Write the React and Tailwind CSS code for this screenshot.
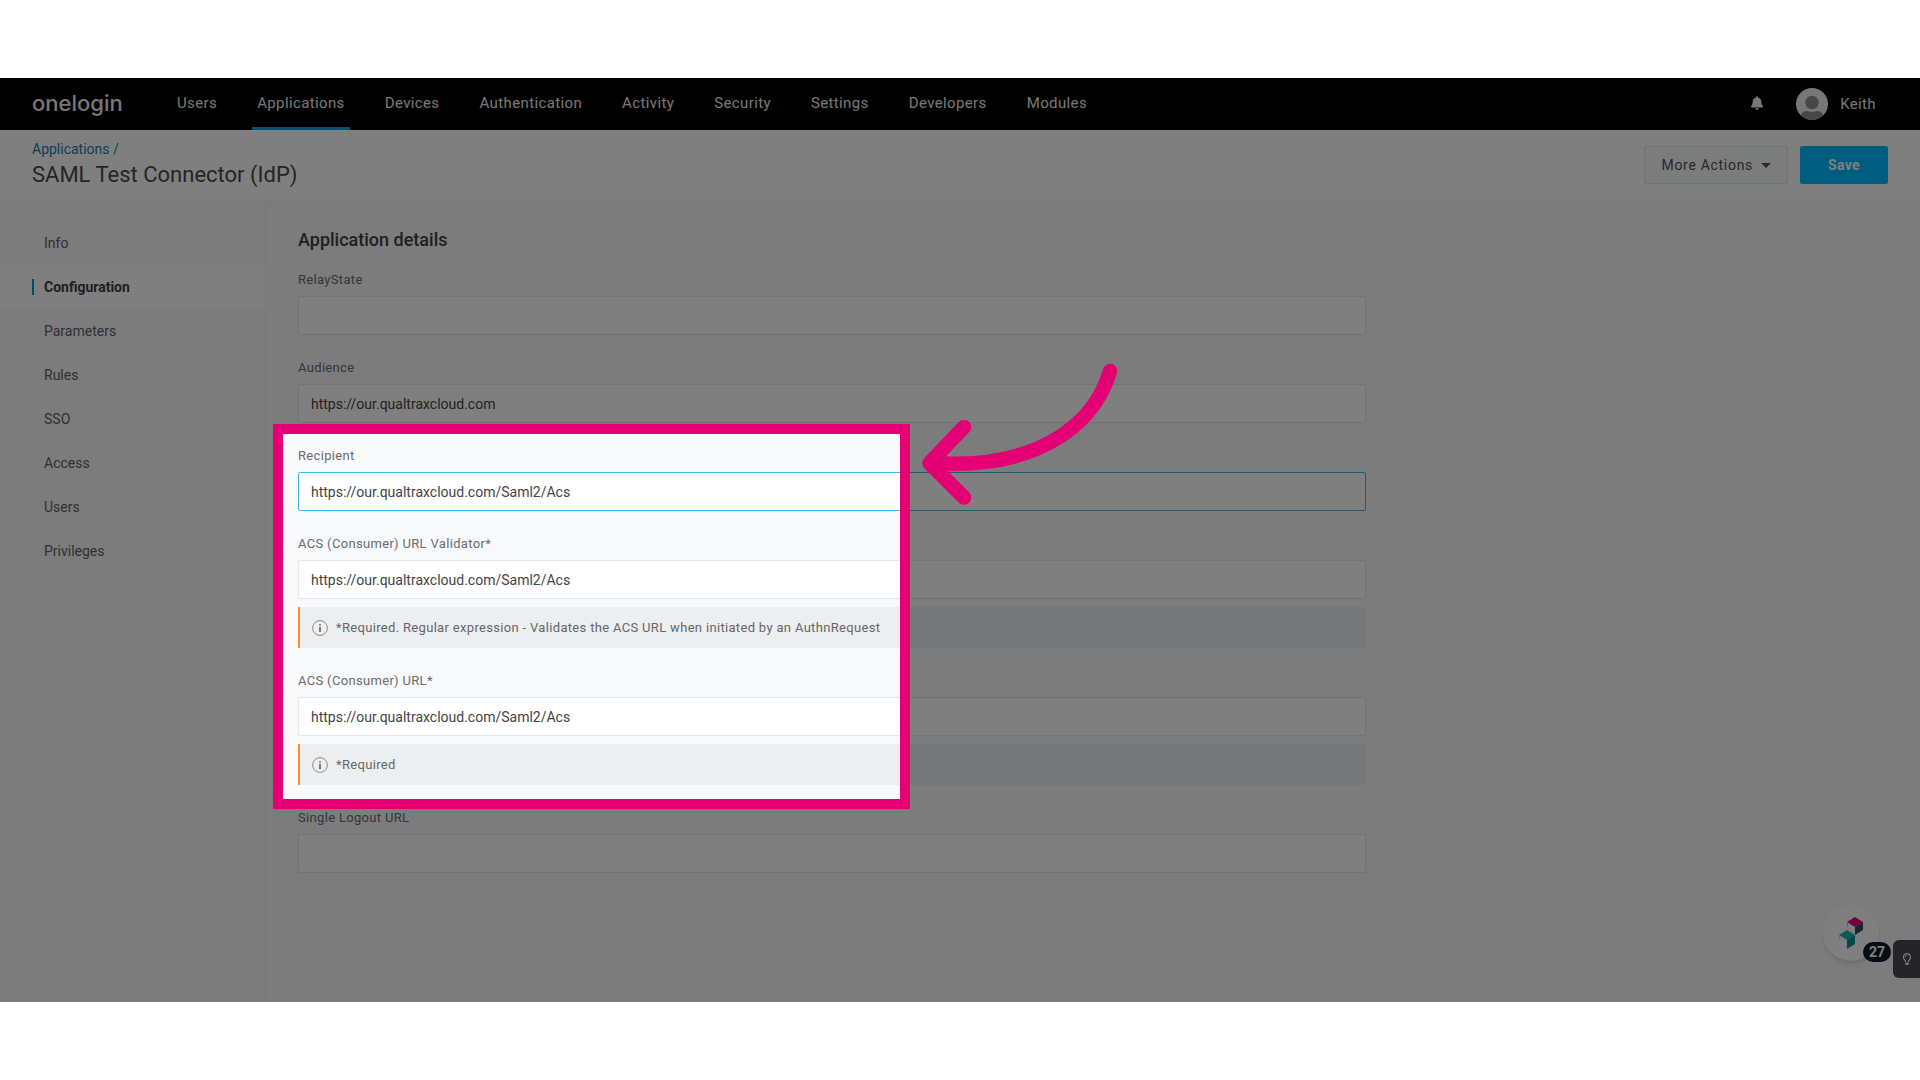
import React from 'react';
import { FaBell, FaRegLightbulb } from 'react-icons/fa';

const NAV_ITEMS = [
  'Users',
  'Applications',
  'Devices',
  'Authentication',
  'Activity',
  'Security',
  'Settings',
  'Developers',
  'Modules',
];

const SIDE_ITEMS = ['Info', 'Configuration', 'Parameters', 'Rules', 'SSO', 'Access', 'Users', 'Privileges'];

const ACS_URL = 'https://our.qualtraxcloud.com/Saml2/Acs';

const FIELDS = [
  { id: 'relay-state', label: 'RelayState', value: '' },
  { id: 'audience', label: 'Audience', value: 'https://our.qualtraxcloud.com' },
  { id: 'recipient', label: 'Recipient', value: ACS_URL, active: true },
  {
    id: 'acs-validator',
    label: 'ACS (Consumer) URL Validator*',
    value: ACS_URL,
    hint: '*Required. Regular expression - Validates the ACS URL when initiated by an AuthnRequest',
  },
  { id: 'acs-url', label: 'ACS (Consumer) URL*', value: ACS_URL, hint: '*Required' },
  { id: 'logout-url', label: 'Single Logout URL', value: '' },
];

const Avatar = () => (
  <svg viewBox="0 0 32 32" className="h-8 w-8">
    <defs>
      <clipPath id="avatar-clip">
        <circle cx="16" cy="16" r="16" />
      </clipPath>
    </defs>
    <g clipPath="url(#avatar-clip)">
      <rect width="32" height="32" fill="#eeeeee" />
      <circle cx="16" cy="14.500" r="6.800" fill="#8c9090" />
      <path d="M4 32c0-6 3-9 6.500-9 2 0 3 1 5.500 1s3.500-1 5.500-1c3.500 0 6.500 3 6.500 9z" fill="#8c9090" />
    </g>
  </svg>
);

const Header = () => (
  <header className="flex h-[52px] shrink-0 items-center bg-black pl-8 pr-11 text-[#eeeeee]">
    <a href="#home" className="w-[140px] pb-0.5 font-[Inter,sans-serif] text-[22px] leading-7 font-medium">
      onelogin
    </a>
    <nav className="flex h-full flex-1 gap-[30px]">
      {NAV_ITEMS.map((item) => (
        <a
          key={item}
          href={`#${item.toLowerCase()}`}
          className={`flex h-full items-center border-b-3 px-[5px] pt-0.5 text-[15px] tracking-wide ${
            item === 'Applications' ? 'border-[#00a8e0]' : 'border-transparent'
          }`}
        >
          {item}
        </a>
      ))}
    </nav>
    <button type="button" aria-label="Notifications" className="mr-8 pb-0.5">
      <FaBell className="h-[14px] w-[14px]" />
    </button>
    <button type="button" className="flex items-center gap-3 text-[15px] tracking-wide">
      <Avatar />
      Keith
    </button>
  </header>
);

const TitleBar = () => (
  <div className="flex h-[71px] shrink-0 items-center justify-between border-b border-[#eef1f1] bg-white px-8">
    <div>
      <a href="#applications" className="block text-sm leading-5 text-[#1a7fa6]">
        Applications /
      </a>
      <h1 className="text-[22px] leading-8 text-[#4a4a4a]">SAML Test Connector (IdP)</h1>
    </div>
    <div className="flex gap-3">
      <button
        type="button"
        className="flex h-[38px] items-center gap-2 rounded-xs border border-[#dfe4e4] bg-[#f7fafa] px-4 text-sm tracking-wider text-[#505050]"
      >
        More Actions
        <svg viewBox="0 0 10 5" className="h-[5px] w-[10px]" fill="currentColor">
          <path d="M0 0h10L5 5z" />
        </svg>
      </button>
      <button type="button" className="h-[38px] w-[88px] rounded-xs bg-[#00baff] text-sm font-bold tracking-wide text-white">
        Save
      </button>
    </div>
  </div>
);

const Sidebar = () => (
  <nav className="w-[266px] shrink-0 border-r border-[#eceef0] pt-5">
    {SIDE_ITEMS.map((item) => {
      const active = item === 'Configuration';
      return (
        <a
          key={item}
          href={`#${item.toLowerCase()}`}
          className={`flex h-11 items-center pl-8 text-sm ${
            active ? 'bg-[#fdfffd] font-bold text-[#404040]' : 'text-[#606060]'
          }`}
        >
          <span className={`h-4 border-l-2 ${active ? 'border-[#009cd6]' : 'border-transparent'}`} />
          <span className="pl-[10px]">{item}</span>
        </a>
      );
    })}
  </nav>
);

const InfoIcon = () => (
  <svg viewBox="0 0 16 16" className="h-4 w-4 shrink-0">
    <circle cx="8" cy="8" r="7.400" fill="none" stroke="#8a8a8a" />
    <circle cx="8" cy="5" r="1" fill="#777" />
    <path d="M7 7h2v5H7z" fill="#777" />
  </svg>
);

const Field = ({ id, label, value, hint, active }) => (
  <div>
    <label htmlFor={id} className="block text-[13px] leading-5 tracking-wide text-[#6b6b6b]">
      {label}
    </label>
    <input
      id={id}
      type="text"
      defaultValue={value}
      className={`mt-[6px] block h-[39px] w-full rounded-xs border bg-white px-3 text-sm text-[#444] outline-none ${
        active ? 'border-[#41b4e6]' : 'border-[#e4e7e8]'
      }`}
    />
    {hint && (
      <p className="mt-2 flex h-[41px] items-center gap-2 border-l-2 border-[#ff8a1f] bg-[#edeef0] px-3 text-[13px] tracking-wide text-[#666]">
        <InfoIcon />
        {hint}
      </p>
    )}
  </div>
);

const HelpWidgets = () => (
  <>
    <button
      type="button"
      aria-label="Help"
      className="absolute bottom-[41px] right-[41px] flex h-14 w-14 items-center justify-center rounded-full bg-white shadow-md"
    >
      <svg viewBox="0 0 24 32" className="h-8 w-6">
        <path d="M8 5l8-5 8 5-8 5z" fill="#e4007c" />
        <path d="M16 10l8-5v8l-8 5z" fill="#3c4a58" />
        <path d="M8 5l1 1v4l-1-1z" fill="#f3a6cd" />
        <path d="M0 18l8-5 8 5-8 5z" fill="#19b5b5" />
        <path d="M8 23l8-5v9l-8 5z" fill="#0c8f94" />
        <path d="M0 18l1 1v4l-1-1z" fill="#a3e0e0" />
      </svg>
    </button>
    <span className="absolute bottom-10 right-[29px] flex h-5 w-7 items-center justify-center rounded-full bg-[#101828] text-sm font-bold text-white">
      27
    </span>
    <button
      type="button"
      aria-label="Tips"
      className="absolute bottom-6 right-0 flex h-[38px] w-[27px] items-center justify-center rounded-l-md bg-[#4a4a52] text-white"
    >
      <FaRegLightbulb className="h-3 w-3" />
    </button>
  </>
);

// Spotlight frame: its spread shadow darkens everything outside the frame
const Spotlight = () => (
  <>
    <div className="pointer-events-none absolute left-[273px] top-[346px] h-[385px] w-[637px] border-10 border-[#e40074] shadow-[0_0_0_2000px_rgba(0,0,0,0.5)]" />
    <svg
      viewBox="0 0 200 150"
      className="pointer-events-none absolute left-[920px] top-[282px] h-[150px] w-[200px]"
      fill="none"
      stroke="#e40074"
      strokeWidth="14.500"
      strokeLinecap="round"
      strokeLinejoin="round"
    >
      <path d="M190 11C177 57 127 111 10 103" />
      <path d="M44 67L9.500 103L44 137.500" />
    </svg>
  </>
);

const App = () => (
  <div className="flex h-screen bg-white py-[78px] font-[Roboto,sans-serif]">
    <div className="relative flex flex-1 flex-col overflow-hidden bg-[#f8f9fb]">
      <Header />
      <TitleBar />
      <div className="flex flex-1">
        <Sidebar />
        <main className="flex-1 pl-8 pt-6">
          <div className="max-w-[1068px]">
            <h2 className="mb-4 text-lg leading-[29px] font-medium text-[#404040]">Application details</h2>
            <form className="flex flex-col gap-[23px]">
              {FIELDS.map((field) => (
                <Field key={field.id} {...field} />
              ))}
            </form>
          </div>
        </main>
      </div>
      <HelpWidgets />
      <Spotlight />
    </div>
  </div>
);

export default App;
